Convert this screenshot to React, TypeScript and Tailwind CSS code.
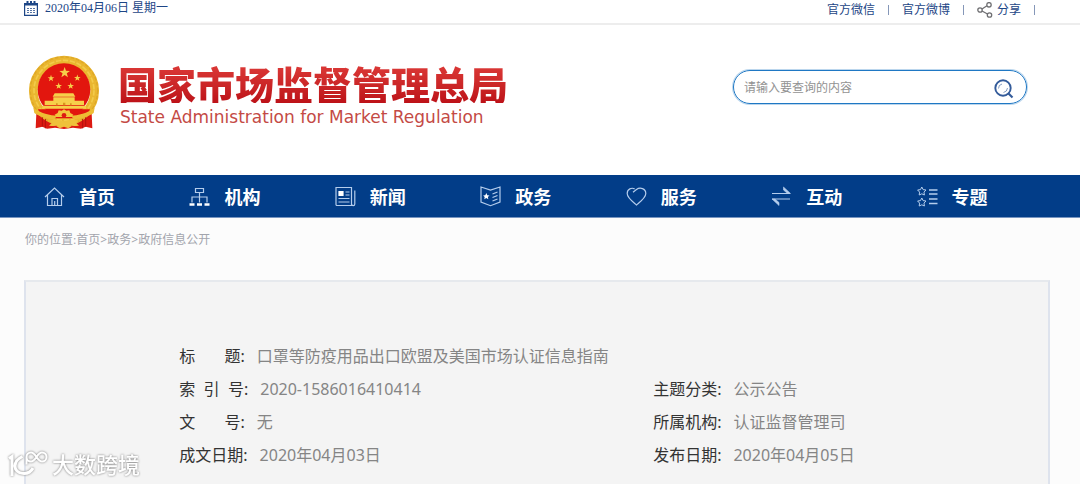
import type { ReactNode } from "react";

const sans = "font-['Noto_Sans','Noto_Sans_CJK_SC',sans-serif]";
const serif = "font-['Liberation_Serif','Noto_Sans_CJK_SC',serif]";

type TNavItem = { label: string; icon: ReactNode };
type TField = { label: string; value: string; wide?: boolean };

const navItems: TNavItem[] = [
  {
    label: "首页",
    icon: <path d="M1 11 10.5 2 20 11M3.5 9v10.5h14V9M8 19.5v-7h5.5v7M10.7 15v4.5" />,
  },
  {
    label: "机构",
    icon: (
      <>
        <path d="M6.5 2.5h8v4h-8zM10.5 6.5v10M3 16.5V11h15v5.5" />
        <path d="M.5 18.500h5M8 18.500h5M15.500 18.500h5" stroke="white" strokeWidth="2.600" />
      </>
    ),
  },
  {
    label: "新闻",
    icon: (
      <>
        <path d="M1 1.500h15.500v18H2a1 1 0 0 1-1-1zM19.800 4.500v13.500a1.500 1.500 0 0 1-3.200 0M10.500 6h4M10.500 9h4M3.500 12.500h11M3.500 16h11" />
        <path d="M4 5.500h4v4H4z" fill="white" stroke="white" />
      </>
    ),
  },
  {
    label: "政务",
    icon: (
      <>
        <path d="M1 1 10.500 4 20 1v15l-9.500 3.700L1 16zM12.500 8l5-2M12.500 11.500l5-2M12.500 15l5-2" />
        <path d="m6.300 7 1 2.200 2.200.2-1.600 1.600.4 2.300-2-1.200-2 1.200.4-2.300-1.600-1.600 2.200-.2z" fill="white" stroke="none" />
      </>
    ),
  },
  {
    label: "服务",
    icon: <path d="M7 6.200 10.500 3.500C14 .8 19.800 2.500 19.800 7.500c0 4.200-5.300 8-9.300 11.500C6.500 15.500 1.200 11.700 1.200 7.500c0-4.500 4.500-6.300 7.500-4.500" />,
  },
  {
    label: "互动",
    icon: (
      <>
        <path d="M1 7.500h18M1 13h18" />
        <path d="M12.500 1v3l4 3.500h3zM8 19.500v-3L4 13H1z" fill="currentColor" strokeWidth=".6" />
      </>
    ),
  },
  {
    label: "专题",
    icon: (
      <>
        <path d="m4.800 1 1.300 2.600 2.900.4-2 2.100.4 2.900-2.600-1.200L2.200 9l.4-2.900L.6 4l2.900-.4zM4.800 12l1.300 2.600 2.900.4-2 2.100.4 2.900-2.600-1.200L2.200 20l.4-2.900L.6 15l2.900-.4z" strokeWidth="1" />
        <path d="M12 4h8.500M12 8h8.500M12 13h8.500M12 17.500h8.500" strokeWidth="1.400" />
      </>
    ),
  },
];

const fields: TField[] = [
  { label: "标\u00a0\u00a0\u00a0\u00a0\u00a0\u00a0\u00a0题:", value: "口罩等防疫用品出口欧盟及美国市场认证信息指南", wide: true },
  { label: "索\u00a0\u00a0引\u00a0\u00a0号:", value: "2020-1586016410414" },
  { label: "主题分类:", value: "公示公告" },
  { label: "文\u00a0\u00a0\u00a0\u00a0\u00a0\u00a0\u00a0号:", value: "无" },
  { label: "所属机构:", value: "认证监督管理司" },
  { label: "成文日期:", value: "2020年04月03日" },
  { label: "发布日期:", value: "2020年04月05日" },
];

const star = "M0-14 3.300-4.500 13.300-4.300 5.300 1.700 8.200 11.300 0 5.600-8.200 11.300-5.300 1.700-13.300-4.300-3.300-4.500z";

function Emblem() {
  return (
    <svg viewBox="14 16 216 228" className="h-[76px] w-[72px] shrink-0" aria-hidden="true">
      <path d="M40 170 37 236l20-5 14 6 24-3 27 4 27-4 24 3 14-6 20 5-3-66z" fill="#dc1a12" />
      <circle cx="122" cy="123" r="92" fill="none" stroke="#eab62f" strokeWidth="26" />
      <circle cx="122" cy="123" r="101" fill="none" stroke="#dda727" strokeWidth="4" strokeDasharray="10 6" />
      <circle cx="122" cy="122" r="90" fill="none" stroke="#f3cb4a" strokeWidth="5" strokeDasharray="16 5" />
      <circle cx="122" cy="120" r="79" fill="#e2160e" />
      <g fill="#f6cf4a">
        <path d={star} transform="translate(124 69) scale(1.2)" />
        <path d={star} transform="translate(83 86) scale(.75)" />
        <path d={star} transform="translate(162 85) scale(.75)" />
        <path d={star} transform="translate(106 109) scale(.75)" />
        <path d={star} transform="translate(142 109) scale(.75)" />
        <path d="M94 131h56l6 10H88zM90 143h64v10h28v13H64v-13h26zM58 168h130v9H56z" />
      </g>
      <path d="M98 161h5v6h-5zM119 159h7v8h-7zM140 161h5v6h-5z" fill="#d8941f" />
      <path d="M44 179h156l-7 18-33 9H84l-33-9z" fill="#e2160e" />
      <path d="M30 174c22 17 50 23 72 24l-9 10c-24 0-46-8-60-18zM214 174c-22 17-50 23-72 24l9 10c24 0 46-8 60-18z" fill="#edbd34" />
      <path d="m122 179 7 4 9-1 3 8 9 5-5 7H99l-5-7 9-5 3-8 9 1z" fill="#f2c63d" />
      <circle cx="122" cy="197" r="7" fill="#dc1a12" />
      <path d="M78 213q22-7 44 2 22-9 44-2l-7 7 8 8q-24 3-45-4-21 7-45 4l8-8zM99 229l23-5 23 5-10 7-13-5-13 5z" fill="#efc13a" />
      <path d="M57 203v28M66 208v28M178 208v28M187 203v28" stroke="#b3120d" strokeWidth="3" />
    </svg>
  );
}

function TopBar() {
  return (
    <div className="flex h-[25px] items-start justify-between border-b-2 border-[#ededed] bg-white pr-[45px] pl-6 text-xs leading-4 text-[#1d4686]">
      <div className="flex items-center gap-[7px]">
        <svg viewBox="0 0 14 15" className="h-[15px] w-[14px]" fill="none" stroke="currentColor" aria-hidden="true">
          <path d="M.6 2.500h12.800v11.900H.6z" strokeWidth="1.200" />
          <path d="M.5 3.500h13M3.500 0v3M7 0v3M10.500 0v3" strokeWidth="2" />
          <path d="M3 7.500h2m1 0h2m1 0h2M3 9.500h2m1 0h2m1 0h2M3 11.500h2m1 0h2m1 0h2" strokeWidth="1" opacity=".75" />
        </svg>
        <span className={serif}>2020年04月06日 星期一</span>
      </div>
      <div className="flex items-center gap-[13px] pt-0.5">
        <a href="#wechat">官方微信</a>
        <i className="h-[10px] w-px bg-[#8597b8]" />
        <a href="#weibo">官方微博</a>
        <i className="h-[10px] w-px bg-[#8597b8]" />
        <a href="#share" className="flex items-center gap-1">
          <svg viewBox="0 0 16 16" className="size-4 text-[#6f6f72]" fill="none" stroke="currentColor" strokeWidth="1.300" aria-hidden="true">
            <circle cx="3" cy="8" r="2.200" />
            <circle cx="12" cy="2.800" r="2.200" />
            <circle cx="12.500" cy="13" r="2.200" />
            <path d="m5 7 5-3.200M5 9l5.500 3" />
          </svg>
          分享
        </a>
        <i className="h-[10px] w-px bg-[#8597b8]" />
      </div>
    </div>
  );
}

function Header() {
  return (
    <header className="flex h-[150px] items-start justify-between bg-white pt-[30px] pr-[53px] pl-7">
      <a href="#home" className="flex">
        <Emblem />
        <div className="pt-2 pl-[18px]">
          <h1 className="bg-linear-to-b from-[#dd3a38] to-[#bd1118] bg-clip-text font-['Noto_Sans_CJK_SC',sans-serif] text-[39px] leading-10 font-black whitespace-nowrap text-transparent">
            国家市场监督管理总局
          </h1>
          <p className="mt-1 pl-0.5 font-['DejaVu_Sans',sans-serif] text-[17px] leading-5 whitespace-nowrap text-[#c44a45]">
            State Administration for Market Regulation
          </p>
        </div>
      </a>
      <form
        className="mt-[15px] flex h-[34px] w-[294px] items-center rounded-full border border-[#1f78c4] pr-3 pl-[10px] ring-1 ring-[#1f78c4]/30"
        onSubmit={(e) => e.preventDefault()}
      >
        <input
          type="text"
          aria-label="搜索"
          placeholder="请输入要查询的内容"
          className="mt-0.5 min-w-0 flex-1 text-xs outline-none placeholder:text-[#929292]"
        />
        <button type="submit" aria-label="查询">
          <svg viewBox="0 0 20 20" className="mt-1 size-5 text-[#335b9a]" fill="none" stroke="currentColor" aria-hidden="true">
            <circle cx="9" cy="9" r="7.700" strokeWidth="1.900" />
            <path d="m14.500 14.500 4 4" strokeWidth="2.200" />
            <path d="M4.500 9.500A4.500 4.500 0 0 1 8 5M13.500 9a5 5 0 0 1-4 4.500" strokeWidth="1" opacity=".6" />
          </svg>
        </button>
      </form>
    </header>
  );
}

function Watermark() {
  return (
    <div className="absolute bottom-1.5 left-2 flex items-center gap-1 text-white drop-shadow-[0_0_1px_#777777]">
      <svg viewBox="0 0 40 28" className="h-7 w-10" fill="none" stroke="currentColor" aria-hidden="true">
        <path d="m1 8.500 3-2V26M14.500 6.500C9 9 7 12 7 16c0 9 14 10 18 2" strokeWidth="3" />
        <path d="M28.500 7c-2-3-3.500-4.500-5.500-4.500a4.500 4.500 0 0 0 0 9c2 0 3.500-1.500 5.500-4.500s3.500-4.500 5.500-4.500a4.500 4.500 0 0 1 0 9c-2 0-3.500-1.500-5.500-4.500M18.500 7v7.500" strokeWidth="2" />
      </svg>
      <span className="text-[22px] leading-7 font-medium">大数跨境</span>
    </div>
  );
}

export default function App() {
  return (
    <div className={`relative flex min-h-screen flex-col bg-[#fcfcfc] ${sans}`} lang="zh-CN">
      <TopBar />
      <Header />
      <nav className="border-b border-[#7895c0] bg-[#023d88] pr-[38px] pl-6">
        <ul className="grid grid-cols-7">
          {navItems.map(({ label, icon }) => (
            <li key={label}>
              <a href={`#${label}`} className="flex h-[42px] items-center gap-[14px] pl-5 text-lg font-bold text-white">
                <svg viewBox="0 0 21 21" className="size-[21px] text-[#b5cdec]" fill="none" stroke="currentColor" strokeWidth="1.200" aria-hidden="true">
                  {icon}
                </svg>
                <span className="pt-0.5">{label}</span>
              </a>
            </li>
          ))}
        </ul>
      </nav>
      <div className="px-[25px] pt-[14px] text-xs leading-4 text-[#a3a5ad]">
        <span className={serif}>你的位置:</span>
        <a href="#home">首页</a>&gt;<a href="#affairs">政务</a>&gt;<a href="#info">政府信息公开</a>
      </div>
      <main className="mt-8 mr-[30px] ml-6 flex-1 border-x-2 border-t-2 border-x-[#dee3ed] border-t-[#e6e9ed] bg-[#f4f4f4]">
        <dl className="grid grid-cols-[6fr_5fr] pt-[58px] pl-[15%] text-base leading-[33px]">
          {fields.map(({ label, value, wide }) => (
            <div key={label} className={wide ? "col-span-2 flex gap-3" : "flex gap-3"}>
              <dt className="text-[#333333]">{label}</dt>
              <dd className="text-[#858585]">{value}</dd>
            </div>
          ))}
        </dl>
      </main>
      <Watermark />
    </div>
  );
}
